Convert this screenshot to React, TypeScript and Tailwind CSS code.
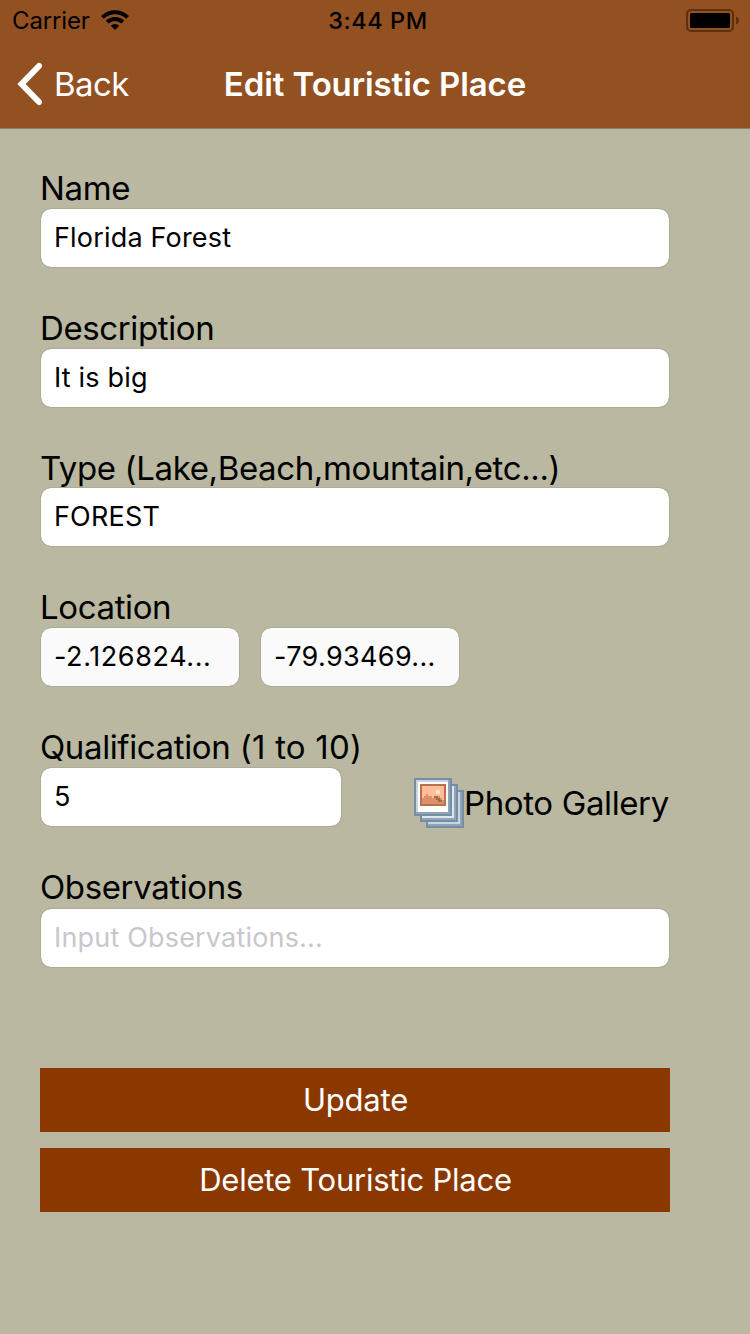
import React from "react";

const labelText = "text-[33px] leading-[40px] tracking-[-0.38px]";
const fieldBox =
  "h-[60px] rounded-[11px] border border-[#aeac98] bg-clip-padding pb-[2px] pl-[13px] pr-3 text-[27px] text-black outline-none placeholder:text-[#c7c7cd] placeholder:opacity-100 disabled:bg-[#fafafa] disabled:opacity-100";

type FieldProps = {
  label: React.ReactNode;
  value?: string;
  placeholder?: string;
  width?: string;
  className?: string;
  labelClass?: string;
};

function Field({ label, value, placeholder, width = "w-[630px]", className = "", labelClass = "" }: FieldProps) {
  return (
    <label className={`flex flex-col ${className}`}>
      <span className={`${labelText} ${labelClass}`}>{label}</span>
      <input className={`${fieldBox} ${width} bg-white tracking-[0.18px]`} defaultValue={value} placeholder={placeholder} />
    </label>
  );
}

function Wifi() {
  return (
    <svg width="28" height="20" viewBox="0 0 28 20" fill="none" stroke="#000" strokeWidth="3.9">
      <path d="M1.400 7.400a18 18 0 0 1 25.200 0" />
      <path d="M6.200 12.200a11.200 11.200 0 0 1 15.600 0" />
      <path d="M14 20l-4.200-4.200a6 6 0 0 1 8.400 0z" fill="#000" stroke="none" />
    </svg>
  );
}

function Battery() {
  return (
    <svg width="54" height="24" viewBox="0 0 54 24">
      <rect x="1" y="2" width="46" height="21" rx="4" fill="none" stroke="#5b3112" strokeWidth="2" />
      <rect x="4" y="5" width="40" height="15" rx="1.5" fill="#000" />
      <path d="M50 8.5q3 1 3 4t-3 4z" fill="#5b3112" />
    </svg>
  );
}

function GalleryIcon() {
  return (
    <svg width="50" height="50" viewBox="0 0 25 25" shapeRendering="crispEdges">
      <path d="M6 6h19v19H6z" fill="#778da5" />
      <path d="M7 7h17v17H7z" fill="#90a4b8" />
      <path d="M7 7h16v16H7z" fill="#c8d5df" />
      <path d="M3 3h19v19H3z" fill="#778da5" />
      <path d="M4 4h17v17H4z" fill="#90a4b8" />
      <path d="M4 4h16v16H4z" fill="#dce6ed" />
      <path d="M0 0h19v19H0z" fill="#778da5" />
      <path d="M1 1h17v17H1z" fill="#90a4b8" />
      <path d="M1 1h16v16H1z" fill="#c8d5df" />
      <path d="M2 2h15v15H2z" fill="#fff" />
      <path d="M3 3h13v11H3z" fill="#b8704f" />
      <path d="M4 4h11v9H4z" fill="#ffbd98" />
      <path d="M4 10h1V9h1V8h1v1h2v1h2V9h2v1h1v1h1v2H4z" fill="#dc9068" />
      <path d="M10 9h2v1h1v1h1v1h-2v-1h-1v-1h-1z" fill="#a56a48" />
      <path d="M11 6h2v2h-2z" fill="#ffe4d0" />
    </svg>
  );
}

export default function App() {
  return (
    <div className="flex h-[1334px] w-[750px] flex-col bg-[#bab8a0] font-['Inter',sans-serif] text-black">
      <header className="h-[129px] border-b border-[#858072] bg-[#935020]">
        <div className="grid h-10 grid-cols-3 items-center">
          <div className="flex items-center pl-3">
            <span className="w-[89px] pt-[2px] text-[24px] leading-[38px] tracking-[-0.15px]">Carrier</span>
            <Wifi />
          </div>
          <div className="pl-[6px] pt-[2px] text-center text-[23.500px] font-medium leading-[38px] tracking-[0.6px]">3:44 PM</div>
          <div className="flex justify-end pr-[10px]">
            <Battery />
          </div>
        </div>
        <div className="grid h-[88px] grid-cols-[210px_330px_210px] items-center text-white">
          <div className="flex items-center pl-[17px]">
            <svg width="26" height="44" viewBox="0 0 26 44" fill="none" stroke="#fff" strokeWidth="6">
              <path d="M22 4L4.500 22L22 40" strokeLinecap="round" strokeLinejoin="miter" />
            </svg>
            <span className="pl-[11px] text-[33px] leading-[40px] tracking-[-0.6px]">Back</span>
          </div>
          <h1 className="text-center text-[33px] font-semibold leading-[40px] tracking-[-0.1px]">Edit Touristic Place</h1>
        </div>
      </header>

      <main className="flex w-[670px] flex-col pl-10 pt-[39px]">
        <Field label="Name" value="Florida Forest" />
        <Field label="Description" value="It is big" className="mt-10" />
        <Field label="Type (Lake,Beach,mountain,etc...)" value="FOREST" className="mt-10" labelClass="-mb-px" />
        <div className="mt-10 flex flex-col">
          <span className={labelText}>Location</span>
          <div className="flex gap-5">
            <input disabled aria-label="Latitude" className={`${fieldBox} w-[200px] tracking-[0.6px]`} defaultValue="-2.126824..." />
            <input disabled aria-label="Longitude" className={`${fieldBox} w-[200px] tracking-[0.35px]`} defaultValue="-79.93469..." />
          </div>
        </div>
        <div className="mt-10 flex items-end justify-between">
          <Field
            label={<>Qualification<span className="tracking-[0.2px]"> (1 to 10)</span></>}
            value="5"
            width="w-[302px]"
            labelClass="whitespace-nowrap"
          />
          <button className="-mb-px flex w-[256px] items-center whitespace-nowrap">
            <GalleryIcon />
            <span className={labelText}>Photo Gallery</span>
          </button>
        </div>
        <Field label="Observations" placeholder="Input Observations..." className="mt-10" labelClass="mb-px" />
        <div className="mt-[100px] flex flex-col gap-4 text-[31px] tracking-[-0.23px] text-white">
          <button className="h-16 bg-[#8a3700] pl-px">Update</button>
          <button className="h-16 bg-[#8a3700] pl-px">Delete Touristic Place</button>
        </div>
      </main>
    </div>
  );
}
